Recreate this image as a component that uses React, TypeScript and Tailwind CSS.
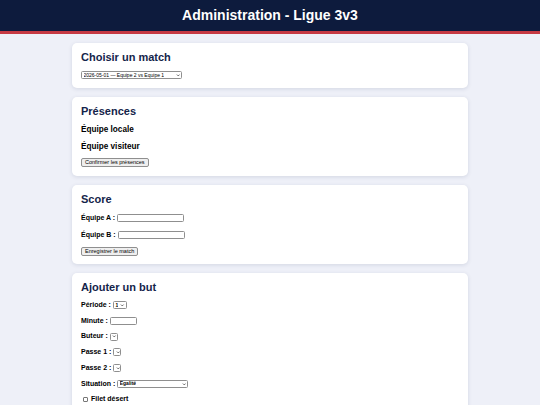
import React from "react";

const font = { fontFamily: '"Liberation Sans", Arial, sans-serif' };

const Card = ({ title, pb = "pb-[9px]", children }: { title: string; pb?: string; children: React.ReactNode }) => (
  <section className={`rounded-[5px] bg-white px-[9px] pt-[7px] shadow-[0_1px_4px_rgba(20,30,70,0.12)] ${pb}`}>
    <h2 className="h-[14px] text-[11px] font-bold leading-[14px] text-[#14244a]">{title}</h2>
    {children}
  </section>
);

const Btn = ({ children }: { children: React.ReactNode }) => (
  <button className="h-[9px] rounded-[2px] border border-[#8f8f8f] bg-[#efefef] px-[3px] text-[5.5px] leading-[7px] text-black">
    {children}
  </button>
);

const Sel = ({ w, value }: { w: string; value: string }) => (
  <span
    className={`inline-flex h-[8px] items-center justify-between rounded-[1.5px] border border-[#8f8f8f] bg-white pl-[1.5px] pr-[1px] text-[5px] leading-none text-black ${w}`}
  >
    <span className="truncate">{value}</span>
    <svg viewBox="0 0 10 10" className="h-[4.5px] w-[4.5px] shrink-0">
      <path d="M2 3.5 L5 6.5 L8 3.5" fill="none" stroke="#222" strokeWidth="1.5" />
    </svg>
  </span>
);

const Inp = ({ w }: { w: string }) => (
  <span className={`inline-block h-[8px] rounded-[1.5px] border border-[#8f8f8f] bg-white ${w}`} />
);

const Field = ({ label, children }: { label: string; children: React.ReactNode }) => (
  <div className="flex h-[10px] items-center gap-[2px] text-[7px] font-bold text-black">
    <span>{label}</span>
    {children}
  </div>
);

export default function App() {
  return (
    <div className="min-h-[405px] bg-[#eef0f8]" style={font}>
      <header className="flex h-[31px] items-center justify-center bg-[#0d1b3d]">
        <h1 className="text-[14px] font-bold text-white">Administration - Ligue 3v3</h1>
      </header>
      <div className="h-[3px] bg-[#c63a44]" />

      <main className="mx-auto flex w-[396px] flex-col gap-[9px] pt-[9px]">
        <Card title="Choisir un match">
          <div className="mt-[7px] flex">
            <Sel w="w-[101px]" value="2026-05-01 — Équipe 2 vs Équipe 1" />
          </div>
        </Card>

        <Card title="Présences">
          <h3 className="mt-[7px] h-[10px] text-[8.2px] font-bold leading-[10px] text-black">Équipe locale</h3>
          <h3 className="mt-[7px] h-[10px] text-[8.2px] font-bold leading-[10px] text-black">Équipe visiteur</h3>
          <div className="mt-[6px] flex">
            <Btn>Confirmer les présences</Btn>
          </div>
        </Card>

        <Card title="Score" pb="pb-[8px]">
          <div className="mt-[7px] flex flex-col gap-[7px]">
            <Field label="Équipe A :">
              <Inp w="w-[67px]" />
            </Field>
            <Field label="Équipe B :">
              <Inp w="w-[67px]" />
            </Field>
          </div>
          <div className="mt-[7px] flex">
            <Btn>Enregistrer le match</Btn>
          </div>
        </Card>

        <Card title="Ajouter un but">
          <div className="mt-[6px] flex flex-col gap-[5.75px]">
            <Field label="Période :">
              <Sel w="w-[14px]" value="1" />
            </Field>
            <Field label="Minute :">
              <Inp w="w-[27px]" />
            </Field>
            <Field label="Buteur :">
              <Sel w="w-[8px]" value="" />
            </Field>
            <Field label="Passe 1 :">
              <Sel w="w-[8px]" value="" />
            </Field>
            <Field label="Passe 2 :">
              <Sel w="w-[8px]" value="" />
            </Field>
            <Field label="Situation :">
              <Sel w="w-[71px]" value="Égalité" />
            </Field>
            <label className="flex h-[10px] items-center gap-[3px] pl-[2px] text-[7px] font-bold text-black">
              <span className="inline-block h-[5px] w-[5px] rounded-[1px] border border-[#767676] bg-white" />
              Filet désert
            </label>
            <div className="h-[20px]" />
          </div>
        </Card>
      </main>
    </div>
  );
}
